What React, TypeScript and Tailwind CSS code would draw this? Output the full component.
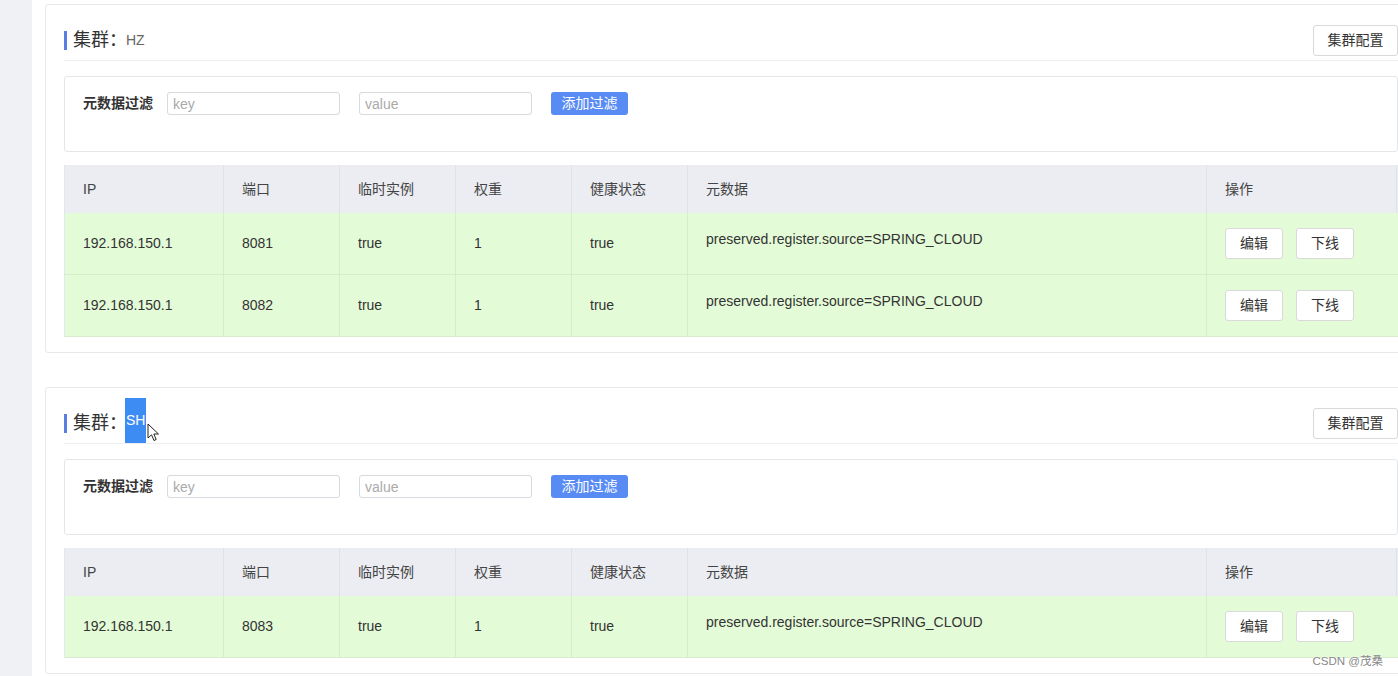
import React from 'react'

type Instance = {
  ip: string
  port: string
  ephemeral: string
  weight: string
  healthy: string
  metadata: string
}

const FONT = { fontFamily: '"Liberation Sans", "Noto Sans CJK SC", sans-serif' }

const columns = ['IP', '端口', '临时实例', '权重', '健康状态', '元数据', '操作']
const gridCols = 'grid grid-cols-[159px_116px_116px_116px_116px_519px_190px]'

function Cursor() {
  return (
    <svg width="13" height="19" viewBox="0 0 13 19" className="absolute left-[22px] top-[25px]">
      <path
        d="M1 1 L1 15 L4.5 11.8 L7 17.5 L9.2 16.5 L6.8 11 L11.5 11 Z"
        fill="#fff"
        stroke="#222"
        strokeWidth="1"
        strokeLinejoin="round"
      />
    </svg>
  )
}

function Cluster({ name, selected, rows }: { name: string; selected?: boolean; rows: Instance[] }) {
  return (
    <div className="w-[1372px] shrink-0 rounded-[3px] border border-[#e6e8eb] bg-white px-[18px] pt-[20px] pb-[15px]">
      <div className="flex h-[31px] items-center justify-between">
        <div className="flex items-center">
          <span className="mr-[6px] h-[19px] w-[3px] bg-[#5b7fe0]" />
          <span className="text-[18px] text-[#333]">集群：</span>
          {selected ? (
            <span className="relative -top-[3px] -ml-[2px] flex items-center">
              <span className="inline-block h-[45px] bg-[#3d8cf4] px-[1px] text-[14px] leading-[45px] text-white">{name}</span>
              <Cursor />
            </span>
          ) : (
            <span className="-ml-[1px] text-[14px] text-[#666]">{name}</span>
          )}
        </div>
        <button className="h-[31px] w-[85px] rounded-[3px] border border-[#d9d9d9] bg-white text-[14px] text-[#333]">
          集群配置
        </button>
      </div>
      <div className="mt-[4px] border-b border-[#eceef1]" />

      <div className="mt-[15px] h-[76px] rounded-[3px] border border-[#e4e6ea] pt-[15px] pl-[18px]">
        <div className="flex items-center">
          <span className="w-[71px] text-[14px] font-bold text-[#333]">元数据过滤</span>
          <input
            placeholder="key"
            className="ml-[13px] h-[23px] w-[173px] rounded-[3px] border border-[#d6d9de] px-[5px] text-[14px] text-[#333] placeholder:text-[#aaa] outline-none"
          />
          <input
            placeholder="value"
            className="ml-[19px] h-[23px] w-[173px] rounded-[3px] border border-[#d6d9de] px-[5px] text-[14px] text-[#333] placeholder:text-[#aaa] outline-none"
          />
          <button className="ml-[19px] h-[23px] w-[77px] rounded-[3px] bg-[#588bf3] text-[14px] text-white">
            添加过滤
          </button>
        </div>
      </div>

      <div className="mt-[13px] border-l border-[#e3e6ea]">
        <div className={`${gridCols} h-[48px] bg-[#ebedf2]`}>
          {columns.map((c) => (
            <div key={c} className="flex items-center border-r border-[#dfe2e7] pl-[18px] text-[14px] text-[#444]">
              {c}
            </div>
          ))}
        </div>
        {rows.map((r) => (
          <div key={r.port} className={`${gridCols} h-[62px] border-b border-[#d8eccd] bg-[#e4fbd8] text-[14px] text-[#333]`}>
            <div className="flex items-center border-r border-[#d8eccd] pl-[18px]">{r.ip}</div>
            <div className="flex items-center border-r border-[#d8eccd] pl-[18px]">{r.port}</div>
            <div className="flex items-center border-r border-[#d8eccd] pl-[18px]">{r.ephemeral}</div>
            <div className="flex items-center border-r border-[#d8eccd] pl-[18px]">{r.weight}</div>
            <div className="flex items-center border-r border-[#d8eccd] pl-[18px]">{r.healthy}</div>
            <div className="border-r border-[#d8eccd] pt-[16px] pl-[18px]">{r.metadata}</div>
            <div className="flex items-center gap-[13px] pl-[18px]">
              <button className="h-[31px] w-[58px] rounded-[3px] border border-[#d9d9d9] bg-white text-[14px] text-[#333]">编辑</button>
              <button className="h-[31px] w-[58px] rounded-[3px] border border-[#d9d9d9] bg-white text-[14px] text-[#333]">下线</button>
            </div>
          </div>
        ))}
      </div>
    </div>
  )
}

const meta = 'preserved.register.source=SPRING_CLOUD'

export default function App() {
  return (
    <div className="relative flex h-[676px] w-[1398px] overflow-hidden bg-white" style={FONT}>
      <div className="h-full w-[32px] shrink-0 bg-[#eff1f5]" />
      <div className="flex min-w-0 flex-1 flex-col gap-[34px] overflow-hidden pt-[4px] pl-[13px]">
        <Cluster
          name="HZ"
          rows={[
            { ip: '192.168.150.1', port: '8081', ephemeral: 'true', weight: '1', healthy: 'true', metadata: meta },
            { ip: '192.168.150.1', port: '8082', ephemeral: 'true', weight: '1', healthy: 'true', metadata: meta },
          ]}
        />
        <Cluster
          name="SH"
          selected
          rows={[{ ip: '192.168.150.1', port: '8083', ephemeral: 'true', weight: '1', healthy: 'true', metadata: meta }]}
        />
      </div>
      <div className="absolute right-[15px] bottom-[6px] text-[11.5px] text-[#888] [text-shadow:0_0_2px_#fff]">
        CSDN @茂桑
      </div>
    </div>
  )
}
